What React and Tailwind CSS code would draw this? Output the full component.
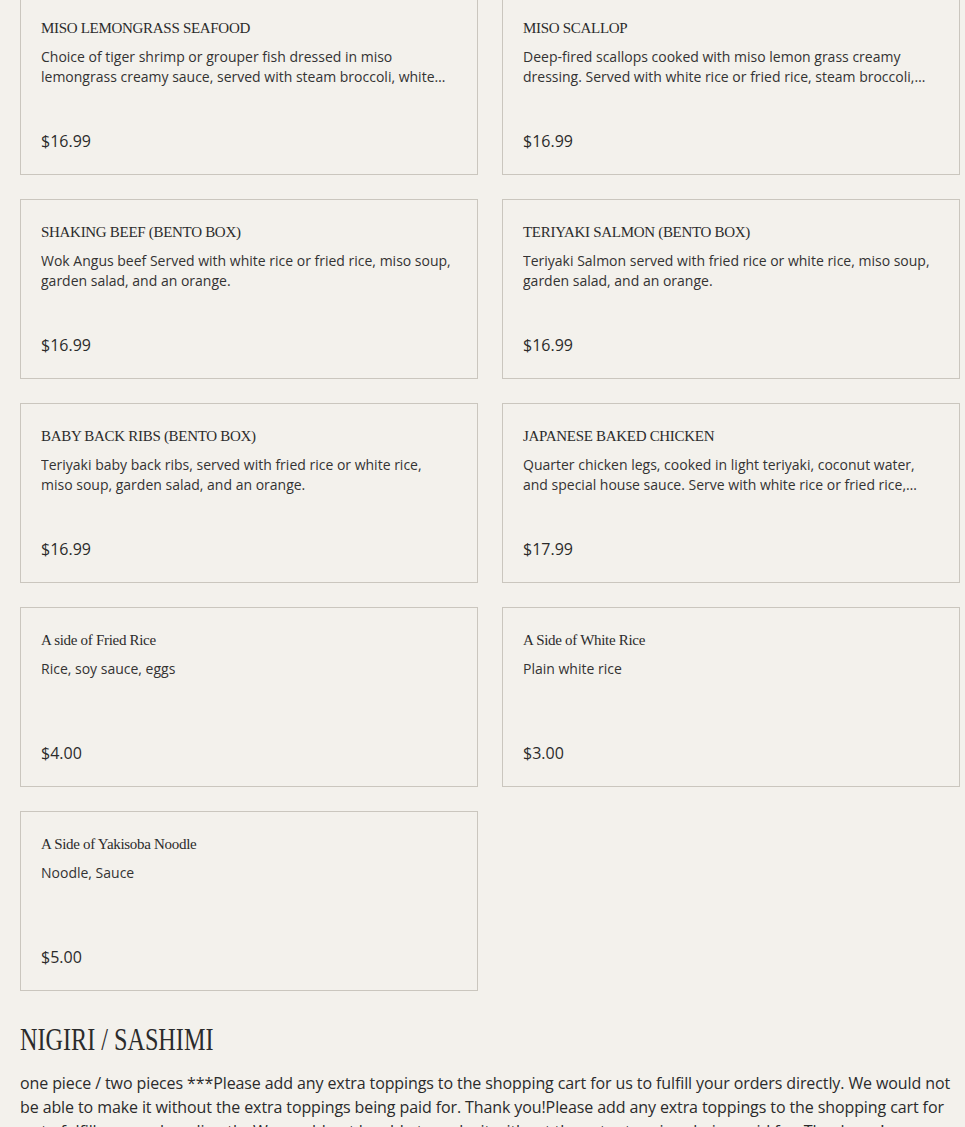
import React from "react";

const items = [
  {
    name: "MISO LEMONGRASS SEAFOOD",
    desc: "Choice of tiger shrimp or grouper fish dressed in miso lemongrass creamy sauce, served with steam broccoli, white rice or fried rice.",
    price: "$16.99",
  },
  {
    name: "MISO SCALLOP",
    desc: "Deep-fired scallops cooked with miso lemon grass creamy dressing. Served with white rice or fried rice, steam broccoli, and salad.",
    price: "$16.99",
  },
  {
    name: "SHAKING BEEF (BENTO BOX)",
    desc: "Wok Angus beef Served with white rice or fried rice, miso soup, garden salad, and an orange.",
    price: "$16.99",
  },
  {
    name: "TERIYAKI SALMON (BENTO BOX)",
    desc: "Teriyaki Salmon served with fried rice or white rice, miso soup, garden salad, and an orange.",
    price: "$16.99",
  },
  {
    name: "BABY BACK RIBS (BENTO BOX)",
    desc: "Teriyaki baby back ribs, served with fried rice or white rice, miso soup, garden salad, and an orange.",
    price: "$16.99",
  },
  {
    name: "JAPANESE BAKED CHICKEN",
    desc: "Quarter chicken legs, cooked in light teriyaki, coconut water, and special house sauce. Serve with white rice or fried rice, and salad.",
    price: "$17.99",
  },
  { name: "A side of Fried Rice", desc: "Rice, soy sauce, eggs", price: "$4.00" },
  { name: "A Side of White Rice", desc: "Plain white rice", price: "$3.00" },
  { name: "A Side of Yakisoba Noodle", desc: "Noodle, Sauce", price: "$5.00" },
];

export default function App() {
  return (
    <div className="h-screen overflow-hidden bg-[#f3f1ec] text-[#2b2b2b] font-['Open_Sans',Lato,sans-serif]">
      <div className="pl-5 pr-[5px]">
        {/* menu cards */}
        <div className="grid grid-cols-2 gap-6 -mt-[5px]">
          {items.map((item) => (
            <div
              key={item.name}
              className="h-[180px] border border-[#cac6be] flex flex-col px-5 pt-[22px]"
            >
              <h3 className="text-[15px] leading-5 tracking-[-0.3px] font-['Liberation_Serif',serif]">
                {item.name}
              </h3>
              <p className="mt-[9px] pr-[5px] text-[14px] leading-5 line-clamp-2 text-[#333]">
                {item.desc}
              </p>
              <div className="mt-auto mb-[21px] text-[16px] leading-6">
                {item.price}
              </div>
            </div>
          ))}
        </div>

        {/* next section */}
        <h2 className="mt-[31px] text-[31px] leading-9 origin-left scale-x-[0.78] font-['Liberation_Serif',serif]">
          NIGIRI / SASHIMI
        </h2>
        <p className="mt-[13px] text-[16px] leading-6 tracking-[-0.1px]">
          one piece / two pieces ***Please add any extra toppings to the shopping cart for us to
          fulfill your orders directly. We would not be able to make it without the extra
          toppings being paid for. Thank you!Please add any extra toppings to the shopping cart
          for us to fulfill your orders directly. We would not be able to make it without the
          extra toppings being paid for. Thank you!
        </p>
      </div>
    </div>
  );
}
